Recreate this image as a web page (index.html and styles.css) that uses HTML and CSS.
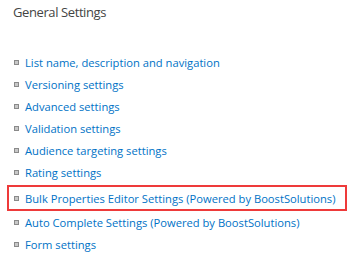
FILE: index.html
```html
<!DOCTYPE html>
<html lang="en">
<head>
    <meta charset="UTF-8">
    <title>General Settings</title>
    <link rel="stylesheet" href="styles.css">
</head>
<body>

<div class="settings">
    <h2 class="settings-title">General Settings</h2>
    <ul class="settings-list">
        <li><a href="#">List name, description and navigation</a></li>
        <li><a href="#">Versioning settings</a></li>
        <li><a href="#">Advanced settings</a></li>
        <li><a href="#">Validation settings</a></li>
        <li><a href="#">Audience targeting settings</a></li>
        <li><a href="#">Rating settings</a></li>
        <li class="highlight"><a href="#">Bulk Properties Editor Settings (Powered by BoostSolutions)</a></li>
        <li><a href="#">Auto Complete Settings (Powered by BoostSolutions)</a></li>
        <li><a href="#">Form settings</a></li>
    </ul>
</div>

</body>
</html>
```

FILE: styles.css
```css
body {
    font-family: 'Open Sans', 'Noto Sans', sans-serif;
    background-color: #fff;
    margin: 0;
}
.settings {
    padding: 2px 0 0 13px;
}
.settings-title {
    font-size: 13px;
    font-weight: 400;
    letter-spacing: -0.4px;
    color: #444;
    margin: 0 0 29px 0;
    line-height: 20px;
}
.settings-list {
    list-style-type: none;
    padding: 0;
    margin: 0;
}
.settings-list li {
    display: flex;
    align-items: center;
    height: 22px;
    font-size: 11.2px;
    white-space: nowrap;
}
.settings-list li::before {
    content: '';
    flex-shrink: 0;
    width: 3px;
    height: 3px;
    border: 1px solid #8a8a8a;
    background-color: #c8c8c8;
    margin: 0 6px 0 1px;
}
.settings-list a {
    color: #0072c6;
    text-decoration: none;
}
.settings-list li.highlight {
    height: 22px;
    margin: 2px 0 0 -6px;
    padding-left: 4px;
    width: 332px;
    border: 2px solid #ee3a3a;
}
```
